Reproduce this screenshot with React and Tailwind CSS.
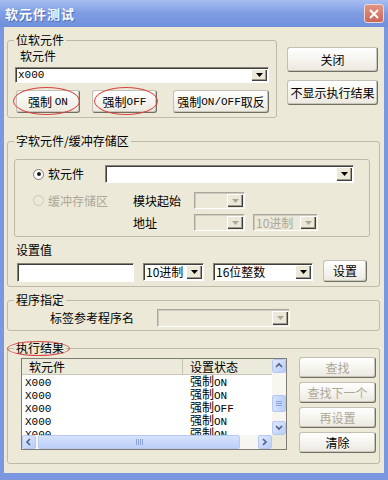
import React from "react";
import clsx from "clsx";

function Mono({ children }) {
  return <span className="font-['Liberation_Mono',monospace] text-[11px]">{children}</span>;
}

function Btn({ children, className, disabled }) {
  return (
    <div
      className={clsx(
        "flex items-center justify-center rounded-[3px] border border-[#c2c0b4] border-r-[#716f64] border-b-[#716f64] bg-linear-to-b from-white to-[#ebe9df] shadow-[inset_-1px_-1px_0_#c9c7bb] whitespace-nowrap",
        disabled ? "text-[#aca899]" : "text-black",
        className
      )}
    >
      {children}
    </div>
  );
}

function Arrow({ disabled }) {
  return (
    <svg width="7" height="4" viewBox="0 0 7 4">
      <path d="M0 0h7L3.5 4z" fill={disabled ? "#aca899" : "#000"} />
    </svg>
  );
}

function Combo({ className, children, disabled }) {
  return (
    <div
      className={clsx(
        "flex items-stretch p-[1px] border border-b-white border-r-white",
        disabled
          ? "border-t-[#aca899] border-l-[#aca899] bg-[#ece9d8] text-[#aca899] shadow-[inset_1px_1px_0_#cfccbd]"
          : "border-t-[#868478] border-l-[#868478] bg-white shadow-[inset_1px_1px_0_#3f3e3a]",
        className
      )}
    >
      <div className="flex-1 flex items-center pl-[1px] whitespace-nowrap leading-[12px]">{children}</div>
      <div className="w-[16px] flex items-center justify-center bg-[#ece9d8] shadow-[inset_1px_1px_0_#ffffff,inset_-1px_-1px_0_#404040,inset_-2px_-2px_0_#9d9b90]">
        <Arrow disabled={disabled} />
      </div>
    </div>
  );
}

function Radio({ checked, disabled }) {
  return (
    <span
      className={clsx(
        "w-[11px] h-[11px] rounded-full border flex items-center justify-center",
        disabled ? "border-[#cbc8ba] bg-[#ece9d8]" : "border-[#7d7b70] bg-white"
      )}
    >
      {checked && <span className="w-[4px] h-[4px] rounded-full bg-[#1a1a1a]" />}
    </span>
  );
}

function Group({ title, className, children }) {
  return (
    <div className={clsx("border border-[#bdbaa9] rounded-[3px]", className)}>
      <div className="-mt-[8px] ml-[6px] px-[2px] w-fit bg-[#ece9d8]">{title}</div>
      {children}
    </div>
  );
}

function Chevron({ dir }) {
  const d = {
    up: "M1 5L4 2l3 3",
    down: "M1 2l3 3 3-3",
    left: "M5 1L2 4l3 3",
    right: "M2 1l3 3-3 3",
  }[dir];
  return (
    <svg width="8" height="8" viewBox="0 0 8 8">
      <path d={d} fill="none" stroke="#4d6185" strokeWidth="1.6" />
    </svg>
  );
}

function SBtn({ dir, className }) {
  return (
    <div
      className={clsx(
        "flex items-center justify-center rounded-[2px] border border-[#b7c9f3] bg-linear-to-br from-[#e1e9fe] to-[#b8ccf8]",
        className
      )}
    >
      <Chevron dir={dir} />
    </div>
  );
}

const rows = [
  ["X000", "ON"],
  ["X000", "ON"],
  ["X000", "OFF"],
  ["X000", "ON"],
  ["X000", "ON"],
];

export default function App() {
  return (
    <div className="relative w-[388px] h-[480px] flex flex-col bg-[#7b97df] font-['Noto_Sans_CJK_SC',sans-serif] text-[12px] leading-[14px] text-black overflow-hidden">
      {/* Title bar */}
      <div className="h-[27px] shrink-0 flex items-center justify-between pl-[5px] pr-[4px] bg-linear-to-b from-[#a6bdf1] via-[#7e9ce2] to-[#6e8fdb]">
        <span className="text-[13px] font-bold text-white tracking-[1px] [text-shadow:1px_1px_0_#4f6db8]">软元件测试</span>
        <div className="w-[20px] h-[19px] rounded-[3px] border border-[#f1d6d0] bg-linear-to-b from-[#e09484] to-[#c8695a] flex items-center justify-center">
          <svg width="10" height="10" viewBox="0 0 10 10">
            <path d="M1 1l8 8M9 1l-8 8" stroke="#fff" strokeWidth="2" />
          </svg>
        </div>
      </div>

      {/* Body */}
      <div className="flex-1 mx-[4px] mb-[7px] bg-[#ece9d8] flex flex-col">
        {/* Top row */}
        <div className="flex items-start">
          <Group title="位软元件" className="ml-[3px] mt-[13px] w-[270px]">
            <div className="px-[7px] pb-[4px]">
              <div className="mt-[2px] ml-[5px]">软元件</div>
              <Combo className="mt-[4px] w-full h-[16px]">
                <Mono>x000</Mono>
              </Combo>
              <div className="mt-[7px] flex">
                <Btn className="ml-[1px] w-[64px] h-[23px]">
                  强制&nbsp;<Mono>ON</Mono>
                </Btn>
                <Btn className="ml-[12px] w-[65px] h-[23px]">
                  强制<Mono>OFF</Mono>
                </Btn>
                <Btn className="ml-[16px] w-[96px] h-[23px]">
                  强制<Mono>ON/OFF</Mono>取反
                </Btn>
              </div>
            </div>
          </Group>
          <div className="ml-[10px] mt-[20px] flex flex-col gap-[8px]">
            <Btn className="w-[91px] h-[25px]">关闭</Btn>
            <Btn className="w-[91px] h-[25px]">不显示执行结果</Btn>
          </div>
        </div>

        {/* Word device / buffer */}
        <Group title="字软元件/缓冲存储区" className="ml-[3px] mt-[23px] w-[373px]">
          <div className="pl-[6px] pr-[9px] pb-[4px]">
            <div className="mt-[11px] border border-[#bdbaa9] rounded-[3px] pb-[5px]">
              <div className="mt-[5px] flex items-center h-[18px]">
                <div className="ml-[18px] w-[72px] flex items-center gap-[4px]">
                  <Radio checked />
                  <span>软元件</span>
                </div>
                <Combo className="w-[249px] h-[18px]" />
              </div>
              <div className="mt-[9px] flex items-center h-[17px]">
                <div className="ml-[18px] w-[100px] flex items-center gap-[4px] text-[#aca899]">
                  <Radio disabled />
                  <span>缓冲存储区</span>
                </div>
                <span className="w-[61px]">模块起始</span>
                <Combo disabled className="w-[51px] h-[17px]" />
              </div>
              <div className="mt-[5px] flex items-center h-[17px]">
                <span className="ml-[118px] w-[61px]">地址</span>
                <Combo disabled className="w-[51px] h-[17px]" />
                <Combo disabled className="ml-[8px] w-[65px] h-[17px]">
                  10进制
                </Combo>
              </div>
            </div>
            <div className="mt-[6px] ml-[2px]">设置值</div>
            <div className="mt-[3px] flex items-start h-[22px]">
              <div className="ml-[3px] mt-[3px] w-[117px] h-[19px] bg-white border border-t-[#868478] border-l-[#868478] border-b-white border-r-white shadow-[inset_1px_1px_0_#3f3e3a]" />
              <Combo className="ml-[9px] mt-[3px] w-[61px] h-[18px]">10进制</Combo>
              <Combo className="ml-[9px] mt-[3px] w-[100px] h-[18px]">16位整数</Combo>
              <Btn className="ml-[10px] w-[44px] h-[22px]">设置</Btn>
            </div>
          </div>
        </Group>

        {/* Program */}
        <Group title="程序指定" className="ml-[3px] mt-[13px] w-[373px]">
          <div className="pl-[42px] pb-[3px]">
            <div className="mt-[2px] flex items-center h-[18px]">
              <span className="w-[107px]">标签参考程序名</span>
              <Combo disabled className="w-[133px] h-[18px]" />
            </div>
          </div>
        </Group>

        {/* Results */}
        <Group title="执行结果" className="ml-[3px] mt-[17px] w-[373px]">
          <div className="mt-[2px] pl-[13px] pr-[3px] pb-[10px] flex items-start">
            <div className="mt-[1px] w-[266px] h-[92px] border border-[#7f7d72] bg-white grid grid-cols-[1fr_14px] grid-rows-[1fr_14px]">
              <div className="overflow-hidden">
                <div className="flex h-[16px] bg-[#ebeadb] border-b border-[#cbc7b8] items-center">
                  <div className="w-[161px] h-full pl-[7px] flex items-center border-r border-[#c7c5b2]">软元件</div>
                  <div className="flex-1 pl-[7px]">设置状态</div>
                </div>
                {rows.map((r, i) => (
                  <div key={i} className="flex h-[13px] items-center leading-[12px]">
                    <div className="w-[161px] pl-[3px]">
                      <Mono>{r[0]}</Mono>
                    </div>
                    <div className="pl-[7px]">
                      强制<Mono>{r[1]}</Mono>
                    </div>
                  </div>
                ))}
              </div>
              <div className="flex flex-col bg-[#f7f6f1]">
                <SBtn dir="up" className="h-[14px]" />
                <div className="mt-[22px] h-[17px] rounded-[2px] border border-[#b7c9f3] bg-linear-to-r from-[#d6e2fe] to-[#bccff8] flex flex-col items-center justify-center gap-[1px]">
                  <span className="w-[6px] h-px bg-[#8ba3d8]" />
                  <span className="w-[6px] h-px bg-[#8ba3d8]" />
                  <span className="w-[6px] h-px bg-[#8ba3d8]" />
                </div>
                <SBtn dir="down" className="mt-auto h-[14px]" />
              </div>
              <div className="flex bg-[#f7f6f1]">
                <SBtn dir="left" className="w-[14px]" />
                <div className="ml-[2px] w-[202px] rounded-[2px] border border-[#b7c9f3] bg-linear-to-b from-[#d6e2fe] to-[#bccff8] flex items-center justify-center gap-[1px]">
                  <span className="w-px h-[6px] bg-[#8ba3d8]" />
                  <span className="w-px h-[6px] bg-[#8ba3d8]" />
                  <span className="w-px h-[6px] bg-[#8ba3d8]" />
                  <span className="w-px h-[6px] bg-[#8ba3d8]" />
                </div>
                <SBtn dir="right" className="ml-auto w-[14px]" />
              </div>
              <div className="bg-[#ece9d8]" />
            </div>
            <div className="ml-[12px] flex flex-col gap-[4px]">
              <Btn disabled className="w-[77px] h-[21px]">查找</Btn>
              <Btn disabled className="w-[77px] h-[21px]">查找下一个</Btn>
              <Btn disabled className="w-[77px] h-[21px]">再设置</Btn>
              <Btn className="w-[77px] h-[21px]">清除</Btn>
            </div>
          </div>
        </Group>
      </div>

      {/* Red annotation ellipses */}
      <div className="pointer-events-none absolute left-[13px] top-[87px] w-[67px] h-[28px] rounded-[50%] border-[1.5px] border-[#d9453f]" />
      <div className="pointer-events-none absolute left-[94px] top-[87px] w-[64px] h-[28px] rounded-[50%] border-[1.5px] border-[#d9453f]" />
      <div className="pointer-events-none absolute left-[7px] top-[341px] w-[63px] h-[15px] rounded-[50%] border-[1.5px] border-[#d9453f]" />
    </div>
  );
}
